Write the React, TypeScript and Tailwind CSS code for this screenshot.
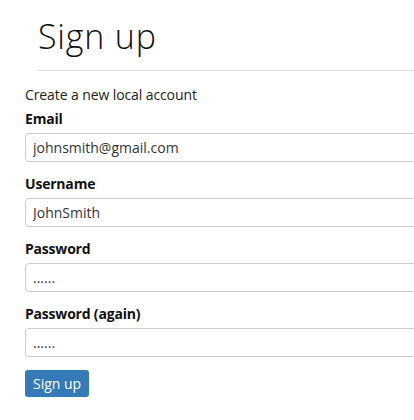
import React from 'react';

// ─────────────────────────────────────────────────────────────────────────────
// Field
// ─────────────────────────────────────────────────────────────────────────────
interface FieldProps {
  label: string;
  value: string;
}

const Field: React.FC<FieldProps> = ({ label, value }) => (
  <div className="mb-[12px]">
    <label className="block text-[14px] leading-[20px] font-bold text-[#111] tracking-[-0.2px] mb-[4px]">
      {label}
    </label>
    <input
      readOnly
      value     = {value}
      className = "block w-[400px] h-[29px] px-[7px] text-[14px] text-[#333] bg-white
                   border border-[#ccc] rounded-[4px] outline-none"
    />
  </div>
);

// ─────────────────────────────────────────────────────────────────────────────
// App
// ─────────────────────────────────────────────────────────────────────────────
const App: React.FC = () => {
  return (
    <div className="w-[414px] h-[420px] overflow-hidden bg-white font-['Open_Sans',sans-serif]">

      {/* ── Page header ──────────────────────────────────────────────── */}
      <div className="pl-[38px] pt-[16px]">
        <h1 className="text-[34px] leading-[40px] font-light tracking-[0.8px] text-[#111]">Sign up</h1>
        <hr className="mt-[14px] border-0 border-t border-[#ddd]" />
      </div>

      {/* ── Form ─────────────────────────────────────────────────────── */}
      <form className="pl-[25px] pt-[14px]">
        <p className="text-[14px] leading-[20px] text-[#222] tracking-[-0.1px] mb-[4px]">
          Create a new local account
        </p>

        <Field label="Email"            value="johnsmith@gmail.com" />
        <Field label="Username"         value="JohnSmith" />
        <Field label="Password"         value="......" />
        <Field label="Password (again)" value="......" />

        <button
          type      = "button"
          className = "mt-[1px] h-[27px] px-[8px] text-[14px] text-white bg-[#337ab7] rounded-[3px]"
        >
          Sign up
        </button>
      </form>
    </div>
  );
};

export default App;
